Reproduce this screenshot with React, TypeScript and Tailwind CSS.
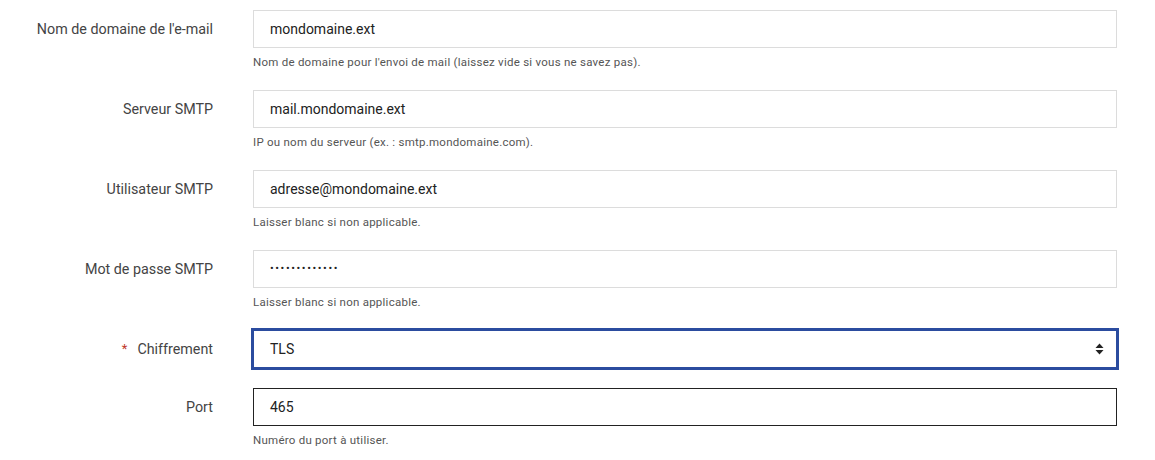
import React from 'react';

type Field = {
  label: string;
  value: string;
  help?: string;
  required?: boolean;
  kind?: 'text' | 'password' | 'select' | 'active';
};

const fields: Field[] = [
  { label: "Nom de domaine de l'e-mail", value: 'mondomaine.ext', help: "Nom de domaine pour l'envoi de mail (laissez vide si vous ne savez pas)." },
  { label: 'Serveur SMTP', value: 'mail.mondomaine.ext', help: 'IP ou nom du serveur (ex. : smtp.mondomaine.com).' },
  { label: 'Utilisateur SMTP', value: 'adresse@mondomaine.ext', help: 'Laisser blanc si non applicable.' },
  { label: 'Mot de passe SMTP', value: '•••••••••••••', help: 'Laisser blanc si non applicable.', kind: 'password' },
  { label: 'Chiffrement', value: 'TLS', required: true, kind: 'select' },
  { label: 'Port', value: '465', help: 'Numéro du port à utiliser.', kind: 'active' },
];

const SortArrows = () => (
  <svg width="9" height="12" viewBox="0 0 9 12" className="text-[#222]">
    <path d="M4.5 0.5 L8.5 5 L0.5 5 Z" fill="currentColor" />
    <path d="M4.5 11.5 L8.5 7 L0.5 7 Z" fill="currentColor" />
  </svg>
);

const Row: React.FC<{ f: Field }> = ({ f }) => {
  const boxBase = 'h-[38px] w-[864px] flex items-center pl-4 pr-3 bg-white text-[14px] text-[#222]';
  let box = `${boxBase} border border-[#dcdcdc]`;
  if (f.kind === 'select') box = `${boxBase} border border-[#2b4c9f] ring-2 ring-[#2b4c9f] justify-between`;
  if (f.kind === 'active') box = `${boxBase} border border-[#222]`;

  return (
    <div className="flex gap-10 mb-5">
      <div className="w-[213px] shrink-0 flex justify-end pt-[9px] text-[14.3px] leading-5 text-[#444]">
        {f.required && <span className="text-[#c0392b] text-[13px] mr-[10px]">*</span>}
        <span>{f.label}</span>
      </div>
      <div className="flex flex-col">
        <div className={box}>
          <span className={f.kind === 'password' ? 'text-[11px] tracking-[1.6px]' : ''}>{f.value}</span>
          {f.kind === 'select' && <SortArrows />}
        </div>
        {f.help && <div className="mt-[6px] h-4 text-[11.5px] tracking-[0.25px] leading-4 text-[#555]">{f.help}</div>}
      </div>
    </div>
  );
};

export default function App() {
  return (
    <div className="w-[1155px] h-[460px] bg-white pt-[10px] overflow-hidden" style={{ fontFamily: 'Roboto, "Noto Sans", Arial, sans-serif' }}>
      {fields.map((f) => (
        <Row key={f.label} f={f} />
      ))}
    </div>
  );
}
